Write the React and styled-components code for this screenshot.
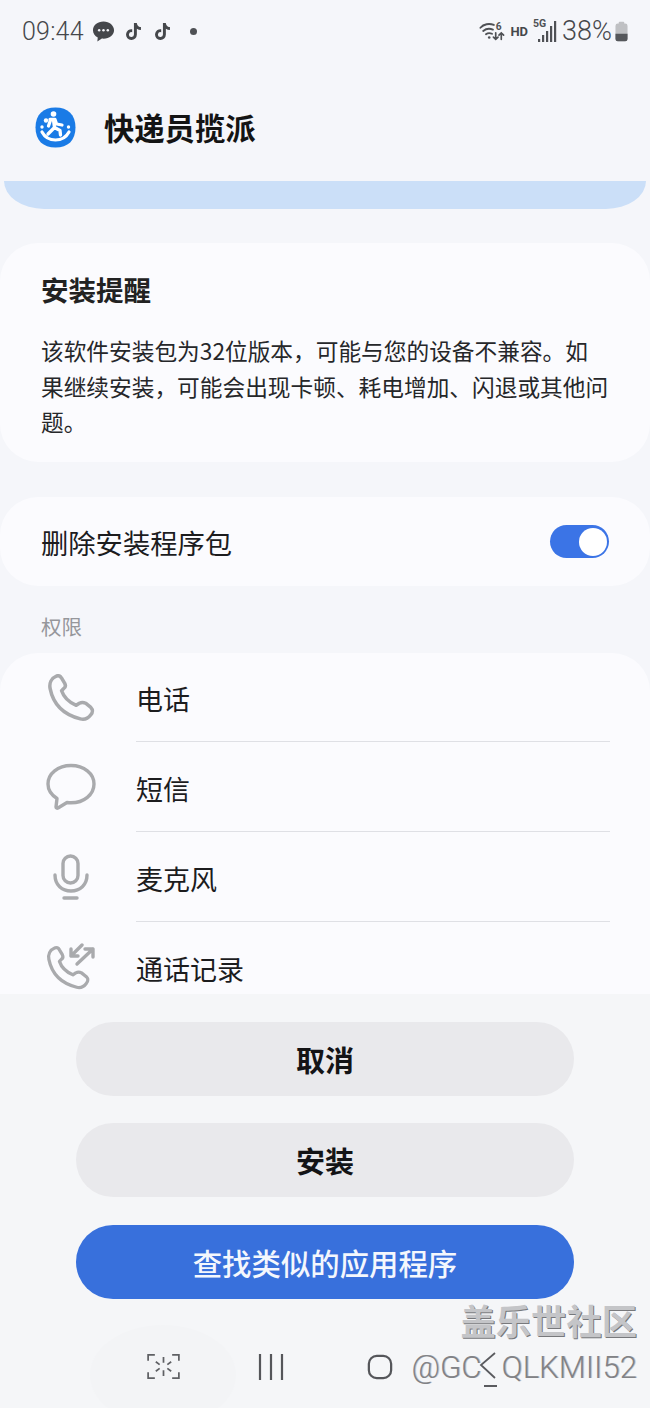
import styled, { createGlobalStyle } from "styled-components";
import { FaTiktok } from "react-icons/fa6";

const GlobalStyle = createGlobalStyle`
  html, body {
    margin: 0;
    padding: 0;
    background: #f5f6fa;
    font-family: "Roboto", "Noto Sans CJK SC", sans-serif;
  }
`;

const cjk = `"Noto Sans CJK SC", "Noto Sans", sans-serif`;

const Page = styled.div`
  width: 650px;
  height: 1408px;
  display: flex;
  flex-direction: column;
  position: relative;
  overflow: hidden;
  background: #f5f6fa;
`;

const Scroll = styled.div`
  flex: 1;
  min-height: 0;
  overflow: hidden;
`;

const StatusBar = styled.div`
  height: 60px;
  padding: 2px 22px 0 22px;
  box-sizing: border-box;
  display: flex;
  align-items: center;
  justify-content: space-between;
  color: #45474b;
`;

const StatusGroup = styled.div`
  display: flex;
  align-items: center;
  gap: ${({ $gap }) => $gap || 8}px;
`;

const Clock = styled.span`
  font-size: 25px;
  font-weight: 300;
  letter-spacing: 0.2px;
`;

const Percent = styled.span`
  font-size: 27px;
  font-weight: 300;
  margin-right: -2px;
`;

const Dot = styled.span`
  width: 7px;
  height: 7px;
  border-radius: 50%;
  background: #4f5155;
  margin-left: 11px;
`;

const Hd = styled.span`
  font-size: 13px;
  font-weight: 700;
`;

const Header = styled.div`
  height: 121px;
  padding: 13px 0 0 35px;
  box-sizing: border-box;
  display: flex;
  align-items: center;
  gap: 28px;
`;

const AppTitle = styled.h1`
  margin: 0;
  font-family: ${cjk};
  font-size: 30.3px;
  font-weight: 700;
  color: #141414;
`;

const Band = styled.div`
  height: 28px;
  margin: 0 4px;
  background: #cbdff8;
  border-radius: 0 0 40px 40px / 0 0 28px 28px;
`;

const Card = styled.div`
  background: #fbfbfe;
  border-radius: 38px;
  box-sizing: border-box;
`;

const NoticeCard = styled(Card)`
  margin-top: 34px;
  height: 219px;
  padding: 27px 41px 0;
`;

const NoticeTitle = styled.h2`
  margin: 0;
  font-family: ${cjk};
  font-size: 27.5px;
  line-height: 38px;
  font-weight: 700;
  color: #222;
`;

const NoticeBody = styled.p`
  margin: 25px 0 0;
  font-family: ${cjk};
  font-size: 22.7px;
  line-height: 35.5px;
  color: #26272a;
`;

const ToggleCard = styled(Card)`
  margin-top: 35px;
  height: 89px;
  padding: 0 41px;
  display: flex;
  align-items: center;
  justify-content: space-between;
`;

const ToggleLabel = styled.span`
  font-family: ${cjk};
  font-size: 27.3px;
  color: #1c1c1e;
`;

const Toggle = styled.div`
  width: 59px;
  height: 33px;
  box-sizing: border-box;
  border-radius: 17px;
  background: #3b74e6;
  display: flex;
  align-items: center;
  justify-content: flex-end;
  padding: 0 2px;
`;

const Knob = styled.div`
  width: 28px;
  height: 28px;
  border-radius: 50%;
  background: #fff;
`;

const SectionLabel = styled.div`
  height: 67px;
  padding: 25px 0 0 41px;
  box-sizing: border-box;
  font-family: ${cjk};
  font-size: 20.5px;
  line-height: 30px;
  color: #96979b;
`;

const PermCard = styled(Card)`
  padding-right: 40px;
  border-radius: 38px 38px 0 0;
`;

const PermRow = styled.div`
  height: 90px;
  display: flex;
  align-items: center;

  &:first-child {
    height: 89px;
  }
`;

const PermIcon = styled.div`
  width: 136px;
  flex: none;
  display: flex;
  justify-content: center;
  padding-left: 6px;
  box-sizing: border-box;
`;

const PermBody = styled.div`
  flex: 1;
  height: 100%;
  display: flex;
  align-items: center;
  padding-top: 3px;
  box-sizing: border-box;
  font-family: ${cjk};
  font-size: 27px;
  color: #1c1c1e;
  border-bottom: ${({ $last }) => ($last ? "none" : "1px solid #dfe0e5")};
`;

const Panel = styled.div`
  height: 414px;
  flex: none;
  box-sizing: border-box;
  background: #f5f6f8;
  padding-top: 28px;
  display: flex;
  flex-direction: column;
`;

const Actions = styled.div`
  display: flex;
  flex-direction: column;
  gap: 27.4px;
  padding: 0 76px;
`;

const ActionButton = styled.button`
  height: 74px;
  border: 0;
  border-radius: 37px;
  font-family: ${cjk};
  font-size: ${({ $primary }) => ($primary ? 29.4 : 29)}px;
  font-weight: ${({ $primary }) => ($primary ? 500 : 700)};
  color: ${({ $primary }) => ($primary ? "#f4f7fd" : "#141416")};
  background: ${({ $primary }) => ($primary ? "#3870dc" : "#e9e9ec")};
`;

const NavBar = styled.div`
  flex: 1;
  position: relative;
  display: flex;
  align-items: center;
  padding: 27px 0 0 147px;
  box-sizing: border-box;
  gap: 78px;
`;

const NavPill = styled.div`
  position: absolute;
  left: 90px;
  top: 26px;
  width: 146px;
  height: 100px;
  border-radius: 50%;
  background: #f3f4f6;
`;

const NavSlot = styled.div`
  position: relative;
  display: flex;
  margin-left: ${({ $shift }) => $shift || 0}px;
`;

const WatermarkTitle = styled.div`
  position: absolute;
  right: 13px;
  top: 1299px;
  font-family: ${cjk};
  font-size: 35.3px;
  line-height: 42px;
  font-weight: 700;
  color: #c4c5c8;
  text-shadow: 1px 1px 0 #77787b;
`;

const WatermarkHandle = styled.div`
  position: absolute;
  right: 13px;
  top: 1350px;
  display: flex;
  font-family: "Roboto", sans-serif;
  font-size: 31.2px;
  font-weight: 300;
  line-height: 36px;
  color: #818286;
  text-shadow: 1px 0 0 #c8c9cc;
`;

const HandleGap = styled.span`
  width: 20px;
`;

const BackIcon = styled.svg`
  position: absolute;
  left: 478px;
  top: 1351px;
`;

const ChatIcon = () => (
  <svg width="23" height="23" viewBox="0 0 24 24">
    <path
      d="M12 1.500C5.800 1.500 1 5.600 1 10.600c0 3.200 2 6 5 7.600l-.4 4.300 4.700-3.100c.6.1 1.100.1 1.700.1 6.200 0 11-4 11-8.900S18.200 1.500 12 1.500z"
      fill="#45474b"
    />
    <circle cx="7.500" cy="10.800" r="1.300" fill="#f5f6fa" />
    <circle cx="12" cy="10.800" r="1.300" fill="#f5f6fa" />
    <circle cx="16.500" cy="10.800" r="1.300" fill="#f5f6fa" />
  </svg>
);

const WifiIcon = () => (
  <svg width="26" height="24" viewBox="0 0 28 24" fill="none" stroke="#4f5155" strokeLinecap="round">
    <path d="M1.500 8.500C5 4.500 11 3.500 16 5.500" strokeWidth="2" />
    <path d="M4.500 12C7.500 9.500 11.500 9 15 10.500" strokeWidth="2" />
    <path d="M7.500 15.500C9.500 14 12 14 14 15" strokeWidth="2" />
    <circle cx="11" cy="19" r="1.400" fill="#4f5155" stroke="none" />
    <text x="18" y="11" fontSize="11" fontWeight="700" fill="#4f5155" stroke="none" fontFamily="Roboto, sans-serif">6</text>
    <path d="M18 14v7m-2.500-2.500 2.500 2.500 2.500-2.500M24 21v-7m-2.500 2.500 2.500-2.500 2.500 2.500" strokeWidth="1.800" />
  </svg>
);

const SignalIcon = () => (
  <svg width="24" height="26" viewBox="0 0 24 26" fill="#4f5155">
    <text x="0" y="9" fontSize="10.500" fontWeight="700" fontFamily="Roboto, sans-serif">5G</text>
    <rect x="5" y="21" width="2.200" height="3" />
    <rect x="9" y="17" width="2.200" height="7" />
    <rect x="13" y="13" width="2.200" height="11" />
    <rect x="17" y="8" width="2.200" height="16" />
    <rect x="21" y="3" width="2.200" height="21" />
  </svg>
);

const BatteryIcon = () => (
  <svg width="13" height="21" viewBox="0 0 14 21">
    <rect x="4" y="0" width="6" height="2.500" rx="1" fill="#bfc0c3" />
    <rect x="0.500" y="2" width="13" height="19" rx="2.500" fill="#bfc0c3" />
    <path d="M.5 13h13v5.500a2.500 2.500 0 0 1-2.500 2.500H3a2.500 2.500 0 0 1-2.500-2.500z" fill="#55575b" />
  </svg>
);

const AppLogo = () => (
  <svg width="41" height="41" viewBox="0 0 41 41" style={{ flex: "none" }}>
    <path
      d="M20.500.5C33 .5 40.500 7.500 40.500 20.500S33 40.500 20.500 40.500.5 33.500.5 20.500 8 .5 20.500.5z"
      fill="#1a7be6"
    />
    <path d="M7 25c3 5.500 8 8 13.500 8S31 30.500 34 25" fill="none" stroke="#fff" strokeWidth="3.200" strokeLinecap="round" />
    <circle cx="18.500" cy="7" r="2.800" fill="#fff" />
    <path d="M15 12.500h5l1.500 4.500 5.500 1M15.500 13l-2 6M18.500 13l1 7.500-6.500 6.500M19.500 20.500l5.500 3 .5 4.500" fill="none" stroke="#fff" strokeWidth="3.300" strokeLinecap="round" strokeLinejoin="round" />
    <circle cx="11" cy="13.500" r="2.200" fill="#fff" />
    <circle cx="7" cy="20" r="1.700" fill="#fff" />
    <circle cx="33.500" cy="20" r="1.700" fill="#fff" />
  </svg>
);

const handset =
  "M9 2C11 1 13 2 14 4L17 9C18 11 17.500 13 16 14L14 16C16 22 21 27 28 30L31 28C33 27 35 27 37 28L42 32C44 34 44 37 42 39C39 43 36 44 32 43C16 39 6 29 3 14C2 9 4 4 9 2Z";

const PhoneIcon = () => (
  <svg width="48" height="48" viewBox="0 0 46 46" fill="none" stroke="#a9aaad" strokeWidth="3.400" strokeLinejoin="round">
    <path d={handset} />
  </svg>
);

const BubbleIcon = () => (
  <svg width="50" height="48" viewBox="0 0 50 48" fill="none" stroke="#a9aaad" strokeWidth="3.400" strokeLinejoin="round">
    <path d="M25 2.500C12 2.500 2 10.500 2 21c0 6 3.500 11 9 14.500l-1 8.500c0 1 1 1.500 2 1l9-5.500c1.300.2 2.700.3 4 .3 13 0 23-8.300 23-18.800S38 2.500 25 2.500z" />
  </svg>
);

const MicIcon = () => (
  <svg width="36" height="46" viewBox="0 0 36 46" fill="none" stroke="#a9aaad" strokeWidth="3.400" strokeLinecap="round">
    <rect x="10" y="2" width="15" height="27" rx="7.500" />
    <path d="M2 21c0 10 7 16 16 16s16-6 16-16" />
    <path d="M11 44h13" />
  </svg>
);

const CallLogIcon = () => (
  <svg width="50" height="48" viewBox="0 0 50 48" fill="none" stroke="#a9aaad" strokeWidth="3.400" strokeLinecap="round" strokeLinejoin="round">
    <path d={handset} transform="translate(0 3) scale(.96)" />
    <path d="M36 2L25 13M25 6v7h7" />
    <path d="M31 21L47 6M39 6h8v8" />
  </svg>
);

const ScanIcon = () => (
  <svg width="33" height="25" viewBox="0 0 34 26" fill="none" stroke="#5f6064" strokeWidth="1.800">
    <path d="M8 1H1v6M26 1h7v6M1 19v6h7M33 19v6h-7" />
    <path d="M17 3v6M17 17v6M9 8l4 3M25 8l-4 3M9 18l4-3M25 18l-4-3" />
  </svg>
);

const RecentIcon = () => (
  <svg width="26" height="26" viewBox="0 0 26 26" stroke="#55565a" strokeWidth="2.200">
    <path d="M2 0v26M13 0v26M24 0v26" />
  </svg>
);

const HomeIcon = () => (
  <svg width="26" height="26" viewBox="0 0 28 28" fill="none" stroke="#55565a" strokeWidth="2.400">
    <rect x="2" y="2" width="24" height="24" rx="8.500" />
  </svg>
);

const permissions = [
  { name: "电话", icon: <PhoneIcon /> },
  { name: "短信", icon: <BubbleIcon /> },
  { name: "麦克风", icon: <MicIcon /> },
  { name: "通话记录", icon: <CallLogIcon /> },
];

const App = () => {
  return (
    <Page>
      <GlobalStyle />
      <Scroll>
        <StatusBar>
          <StatusGroup $gap={8}>
            <Clock>09:44</Clock>
            <ChatIcon />
            <FaTiktok size={17} style={{ marginLeft: 2 }} />
            <FaTiktok size={17} style={{ marginLeft: 4 }} />
            <Dot />
          </StatusGroup>
          <StatusGroup $gap={5}>
            <WifiIcon />
            <Hd>HD</Hd>
            <SignalIcon />
            <Percent>38%</Percent>
            <BatteryIcon />
          </StatusGroup>
        </StatusBar>
        <Header>
          <AppLogo />
          <AppTitle>快递员揽派</AppTitle>
        </Header>
        <Band />
        <NoticeCard>
          <NoticeTitle>安装提醒</NoticeTitle>
          <NoticeBody>
            该软件安装包为32位版本，可能与您的设备不兼容。如果继续安装，可能会出现卡顿、耗电增加、闪退或其他问题。
          </NoticeBody>
        </NoticeCard>
        <ToggleCard>
          <ToggleLabel>删除安装程序包</ToggleLabel>
          <Toggle>
            <Knob />
          </Toggle>
        </ToggleCard>
        <SectionLabel>权限</SectionLabel>
        <PermCard>
          {permissions.map((p, i) => (
            <PermRow key={p.name}>
              <PermIcon>{p.icon}</PermIcon>
              <PermBody $last={i === permissions.length - 1}>{p.name}</PermBody>
            </PermRow>
          ))}
        </PermCard>
      </Scroll>
      <Panel>
        <Actions>
          <ActionButton>取消</ActionButton>
          <ActionButton>安装</ActionButton>
          <ActionButton $primary>查找类似的应用程序</ActionButton>
        </Actions>
        <NavBar>
          <NavPill />
          <NavSlot><ScanIcon /></NavSlot>
          <NavSlot><RecentIcon /></NavSlot>
          <NavSlot $shift={5}><HomeIcon /></NavSlot>
        </NavBar>
      </Panel>
      <WatermarkTitle>盖乐世社区</WatermarkTitle>
      <WatermarkHandle>
        <span>@GC</span>
        <HandleGap />
        <span>QLKMII52</span>
      </WatermarkHandle>
      <BackIcon width="20" height="38" viewBox="0 0 20 38" fill="none" stroke="#5a5b5f" strokeWidth="1.800">
        <path d="M17 2L3 14l14 13M6 35h13" />
      </BackIcon>
    </Page>
  );
};

export default App;
